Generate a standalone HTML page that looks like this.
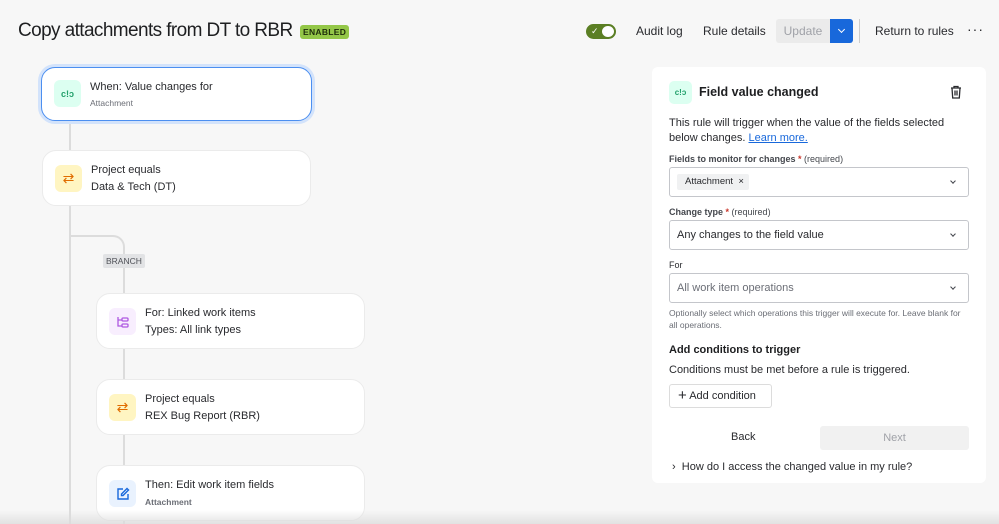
<!DOCTYPE html>
<html><head><style>
*{box-sizing:border-box;margin:0;padding:0}
body{width:999px;height:524px;overflow:hidden;background:#f7f7f7;font-family:"Liberation Sans",sans-serif;color:#292a2e;position:relative}
.abs{position:absolute}
h1{position:absolute;left:18px;top:20px;font-size:19px;font-weight:400;color:#1e1f21;letter-spacing:-0.6px;white-space:nowrap}
.badge{left:300px;top:25px;background:#94c748;color:#1f2d0b;font-size:8.5px;font-weight:700;padding:2px 3px;border-radius:3px;letter-spacing:.3px}
.nav{top:24px;font-size:12px;color:#292a2e}
.card{position:absolute;background:#fff;border:1px solid #ebebeb;border-radius:14px}
.ico{position:absolute;left:12px;width:27px;height:27px;border-radius:6px;display:flex;align-items:center;justify-content:center}
.t1{position:absolute;left:48px;font-size:11px;color:#292a2e}
.t2{position:absolute;left:48px;font-size:8.5px;color:#6b6e76}
.line{position:absolute;background:#dcdcdc;width:2px}
.lbl{font-size:9px;font-weight:700;color:#44474d}
.sel{position:absolute;left:669px;width:300px;height:30px;border:1px solid #c4c6cb;border-radius:3px;background:#fff;font-size:11px;padding-left:7px;line-height:28px}
.chev{position:absolute;right:13px;top:11px;width:4px;height:4px;border-right:1.3px solid #44474d;border-bottom:1.3px solid #44474d;transform:rotate(45deg)}
</style></head><body>
<h1>Copy attachments from DT to RBR</h1>
<div class="abs badge">ENABLED</div>

<div class="abs" style="left:586px;top:24px;width:30px;height:15px;border-radius:8px;background:#5b7f24"></div>
<div class="abs" style="left:602px;top:26px;width:12px;height:11px;border-radius:50%;background:#fff"></div>
<div class="abs" style="left:591px;top:26px;color:#fff;font-size:9px">✓</div>
<div class="abs nav" style="left:636px">Audit log</div>
<div class="abs nav" style="left:703px">Rule details</div>
<div class="abs" style="left:776px;top:19px;width:54px;height:24px;background:#ebebeb;border-radius:3px 0 0 3px;color:#a0a2a8;font-size:12px;line-height:24px;text-align:center">Update</div>
<div class="abs" style="left:830px;top:19px;width:23px;height:24px;background:#1868db;border-radius:0 3px 3px 0"></div>
<div class="abs" style="left:839px;top:27px;width:5px;height:5px;border-right:1.5px solid #fff;border-bottom:1.5px solid #fff;transform:rotate(45deg)"></div>
<div class="abs" style="left:859px;top:19px;width:1px;height:24px;background:#ccc"></div>
<div class="abs nav" style="left:875px">Return to rules</div>
<div class="abs" style="left:967px;top:21px;font-size:14px;letter-spacing:1px">···</div>

<div class="line" style="left:69px;top:118px;height:34px"></div>
<div class="line" style="left:69px;top:205px;height:319px"></div>
<div class="abs" style="left:70px;top:235px;width:55px;height:30px;border-top:2px solid #dcdcdc;border-right:2px solid #dcdcdc;border-radius:0 12px 0 0"></div>
<div class="line" style="left:123px;top:262px;height:262px"></div>
<div class="abs" style="left:103px;top:254px;background:#e2e3e5;color:#505258;font-size:8.5px;padding:2px 3px;border-radius:2px">BRANCH</div>

<div class="card" style="left:41px;top:67px;width:271px;height:54px;border:1.5px solid #4c8ff0;box-shadow:0 0 0 3px #d3e3fb">
<div class="ico" style="top:12px;background:#dcfff1;color:#22a06b;font-size:9px;font-weight:700">c!ɔ</div>
<div class="t1" style="top:13px">When: Value changes for</div><div class="t2" style="top:30px">Attachment</div></div>

<div class="card" style="left:42px;top:150px;width:269px;height:56px">
<div class="ico" style="top:14px;background:#fff5c2;color:#e06c00;font-size:14px">⇄</div>
<div class="t1" style="top:13px">Project equals</div><div class="t1" style="top:30px">Data &amp; Tech (DT)</div></div>

<div class="card" style="left:96px;top:293px;width:269px;height:56px">
<div class="ico" style="top:14px;background:#f8eefe;color:#af59e1;font-size:12px">
<svg width="14" height="14" viewBox="0 0 14 14" fill="none" stroke="#af59e1" stroke-width="1.3"><path d="M2 2v9h4M2 5h4"/><rect x="6" y="3" width="6" height="3" rx="1"/><rect x="6" y="9" width="6" height="3" rx="1"/></svg></div>
<div class="t1" style="top:13px">For: Linked work items</div><div class="t1" style="top:30px">Types: All link types</div></div>

<div class="card" style="left:96px;top:379px;width:269px;height:56px">
<div class="ico" style="top:14px;background:#fff5c2;color:#e06c00;font-size:14px">⇄</div>
<div class="t1" style="top:13px">Project equals</div><div class="t1" style="top:30px">REX Bug Report (RBR)</div></div>

<div class="card" style="left:96px;top:465px;width:269px;height:56px">
<div class="ico" style="top:14px;background:#e9f2fe;">
<svg width="14" height="14" viewBox="0 0 14 14" fill="none" stroke="#1868db" stroke-width="1.4"><path d="M7 2H2v10h10V7"/><path d="M11 1.5l1.5 1.5L7 8.5H5.5V7z"/></svg></div>
<div class="t1" style="top:13px">Then: Edit work item fields</div><div class="t2" style="top:31px;font-weight:700">Attachment</div></div>

<div class="abs" style="left:0;top:510px;width:999px;height:14px;background:linear-gradient(rgba(230,230,230,0),rgba(220,220,220,.8))"></div>

<div class="abs" style="left:652px;top:67px;width:334px;height:416px;background:#fff;border-radius:6px"></div>
<div class="abs" style="left:669px;top:81px;width:23px;height:23px;border-radius:5px;background:#dcfff1;color:#22a06b;font-size:8px;font-weight:700;text-align:center;line-height:23px">c!ɔ</div>
<div class="abs" style="left:699px;top:85px;font-size:12.5px;font-weight:700;color:#1e1f21">Field value changed</div>
<svg class="abs" style="left:950px;top:85px" width="12" height="14" viewBox="0 0 12 14" fill="none" stroke="#292a2e" stroke-width="1.3"><path d="M1 3h10M4 3V1.5h4V3M2 3l.7 10h6.6L10 3M5 5.5v5M7 5.5v5"/></svg>
<div class="abs" style="left:669px;top:116px;font-size:11px;line-height:15px;width:290px">This rule will trigger when the value of the fields selected below changes. <span style="color:#1868db;text-decoration:underline">Learn more.</span></div>
<div class="abs lbl" style="left:669px;top:154px">Fields to monitor for changes<span style="color:#c9372c"> *</span> <span style="font-weight:400">(required)</span></div>
<div class="sel" style="top:167px"><span style="display:inline-block;background:#f0f1f2;font-size:9.5px;line-height:16px;padding:0 5px 0 8px;margin-top:6px;vertical-align:top;border-radius:2px">Attachment &nbsp;×</span><div class="chev"></div></div>
<div class="abs lbl" style="left:669px;top:207px">Change type<span style="color:#c9372c"> *</span> <span style="font-weight:400">(required)</span></div>
<div class="sel" style="top:220px">Any changes to the field value<div class="chev"></div></div>
<div class="abs lbl" style="left:669px;top:260px;font-weight:400;color:#292a2e">For</div>
<div class="sel" style="top:273px;color:#6b6e76">All work item operations<div class="chev"></div></div>
<div class="abs" style="left:669px;top:307px;font-size:8.5px;color:#6b6e76;line-height:12px;width:295px">Optionally select which operations this trigger will execute for. Leave blank for all operations.</div>
<div class="abs" style="left:669px;top:344px;font-size:11px;font-weight:700;color:#1e1f21">Add conditions to trigger</div>
<div class="abs" style="left:669px;top:364px;font-size:11px">Conditions must be met before a rule is triggered.</div>
<div class="abs" style="left:669px;top:384px;width:103px;height:24px;border:1px solid #dcdcdc;border-radius:3px;font-size:11px;line-height:22px;padding-left:8px"><span style="font-size:15px;vertical-align:-1px">+</span> Add condition</div>
<div class="abs" style="left:731px;top:431px;font-size:11px">Back</div>
<div class="abs" style="left:820px;top:426px;width:149px;height:24px;background:#f1f1f1;border-radius:3px;color:#a0a2a8;font-size:11px;text-align:center;line-height:24px">Next</div>
<div class="abs" style="left:672px;top:461px;font-size:11px">›&nbsp; How do I access the changed value in my rule?</div>
</body></html>
